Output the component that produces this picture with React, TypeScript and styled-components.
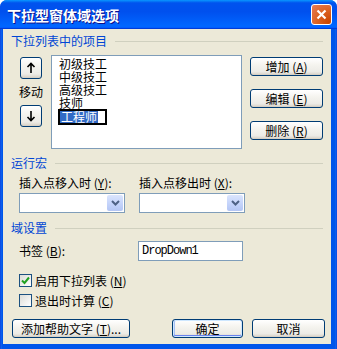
import React from "react";
import styled, { createGlobalStyle } from "styled-components";

const Global = createGlobalStyle`
  html, body { margin: 0; padding: 0; background: #ffffff; }
  body { font-family: "Noto Sans CJK SC", "Noto Sans", sans-serif; }
  * { box-sizing: border-box; }
`;

const Window = styled.div`
  width: 337px;
  height: 349px;
  display: flex;
  flex-direction: column;
  background: linear-gradient(90deg, #0831d9 0, #166aee 1px, #0055ea 2px, #0055ea calc(100% - 2px), #166aee calc(100% - 1px), #0831d9 100%);
  border-radius: 7px 7px 0 0;
  overflow: hidden;
  font-size: 12px;
  color: #000;
`;

const TitleBar = styled.div`
  height: 29px;
  flex: none;
  display: flex;
  align-items: center;
  justify-content: space-between;
  padding: 0 5px 0 7px;
  background: linear-gradient(180deg, #0997ff 0%, #0053ee 10%, #0050ee 40%, #0066ff 88%, #0066ff 93%, #005bff 95%, #003dd7 96%, #003dd7 100%);
`;

const Title = styled.span`
  color: #fff;
  font-size: 14px;
  font-weight: 700;
  letter-spacing: 0;
  text-shadow: 1px 1px #0f1089;
  line-height: 16px;
`;

const CloseButton = styled.div`
  width: 21px;
  height: 21px;
  border: 1px solid #fff;
  border-radius: 3px;
  background: radial-gradient(circle at 90% 90%, #cc4600 0%, #dc6527 55%, #e77c5a 100%);
  display: flex;
  align-items: center;
  justify-content: center;
`;

const Body = styled.div`
  flex: 1;
  margin: 0 6px 5px 3px;
  background: #ece9d8;
  padding: 5px 8px 0 8px;
  display: flex;
  flex-direction: column;
`;

const GroupHeader = styled.div<{ $top: number }>`
  display: flex;
  align-items: center;
  height: 14px;
  margin-top: ${(p) => p.$top}px;
`;

const GroupLabel = styled.span`
  color: #0046d5;
  font-size: 12px;
  line-height: 14px;
  white-space: nowrap;
`;

const GroupLine = styled.div`
  flex: 1;
  height: 1px;
  margin-left: 8px;
  background: #d0d0bf;
`;

const ItemsRow = styled.div`
  display: flex;
  align-items: flex-start;
  margin-top: 7px;
`;

const MoveColumn = styled.div`
  margin-left: 9px;
  padding-top: 2px;
  width: 22px;
  display: flex;
  flex-direction: column;
  align-items: center;
`;

const MoveLabel = styled.div`
  height: 26px;
  line-height: 26px;
  white-space: nowrap;
  font-size: 12px;
`;

const XPButton = styled.button<{ $w: number; $h?: number; $default?: boolean }>`
  width: ${(p) => p.$w}px;
  height: ${(p) => p.$h ?? 19}px;
  padding: 0;
  margin: 0;
  border: 1px solid #003c74;
  border-radius: 3px;
  background: linear-gradient(180deg, #ffffff 0%, #f5f4ef 40%, #ecebe6 80%, #d6d0c5 100%);
  box-shadow: ${(p) =>
    p.$default
      ? "inset 0 0 0 1px #cee7ff, inset 0 -1px 0 1px #6982ee, inset 1px 0 0 1px #a6c1f5"
      : "inset 0 -1px 0 0 #d6d0c5"};
  font-family: "Noto Sans CJK SC", "Noto Sans", sans-serif;
  font-size: 12px;
  line-height: 14px;
  color: #000;
  display: flex;
  align-items: center;
  justify-content: center;
  white-space: nowrap;
  flex: none;
`;

const ListBox = styled.div`
  margin-left: 9px;
  width: 192px;
  height: 94px;
  border: 1px solid #7f9db9;
  background: #fff;
  padding: 1px 0 0 7px;
  display: flex;
  flex-direction: column;
`;

const ListItem = styled.div`
  height: 13px;
  line-height: 13px;
  font-size: 12px;
  white-space: nowrap;
`;

const EditBox = styled.div`
  margin: 0 0 0 -1px;
  width: 49px;
  height: 16px;
  border: 2px solid #000;
  background: #fff;
  display: flex;
  align-items: center;
  font-size: 12px;
  line-height: 12px;
`;

const Selected = styled.span`
  background: #316ac5;
  color: #fff;
  padding: 0 1px;
  line-height: 12px;
`;

const ButtonColumn = styled.div`
  margin-left: 8px;
  padding-top: 2px;
  display: flex;
  flex-direction: column;
  gap: 13px;
`;

const FieldsRow = styled.div`
  display: flex;
  gap: 14px;
  margin-top: 6px;
  padding-left: 8px;
`;

const Field = styled.div`
  display: flex;
  flex-direction: column;
`;

const FieldLabel = styled.span`
  height: 14px;
  line-height: 14px;
  white-space: nowrap;
`;

const Combo = styled.div`
  margin-top: 3px;
  width: 106px;
  height: 20px;
  border: 1px solid #7f9db9;
  background: #fff;
  padding: 1px;
  display: flex;
  justify-content: flex-end;
`;

const DropButton = styled.div`
  width: 16px;
  height: 100%;
  border-radius: 2px;
  background: linear-gradient(180deg, #dbe5fd 0%, #c6d5fb 50%, #b3c5f4 100%);
  display: flex;
  align-items: center;
  justify-content: center;
`;

const BookmarkRow = styled.div`
  display: flex;
  align-items: center;
  margin-top: 6px;
  padding-left: 8px;
`;

const RowLabel = styled.span`
  width: 119px;
  white-space: nowrap;
  line-height: 14px;
`;

const TextBox = styled.div`
  width: 105px;
  height: 20px;
  border: 1px solid #7f9db9;
  background: #fff;
  padding-left: 3px;
  font-family: "Liberation Mono", monospace;
  font-size: 12px;
  letter-spacing: -1px;
  line-height: 18px;
`;

const CheckRow = styled.div<{ $top: number }>`
  display: flex;
  align-items: center;
  gap: 3px;
  height: 15px;
  margin-top: ${(p) => p.$top}px;
  padding-left: 8px;
  white-space: nowrap;
`;

const CheckBox = styled.div`
  width: 13px;
  height: 13px;
  border: 1px solid #1c5180;
  background: linear-gradient(135deg, #dcdcd7 0%, #ffffff 100%);
  display: flex;
  align-items: center;
  justify-content: center;
`;

const BottomRow = styled.div`
  display: flex;
  margin-top: 11px;
`;

const Spacer = styled.div<{ $w: number }>`
  width: ${(p) => p.$w}px;
  flex: none;
`;

const Arrow = ({ up }: { up: boolean }) => (
  <svg width="12" height="12" viewBox="0 0 12 12">
    {up ? (
      <path d="M6 1.5 V11 M2.5 5 L6 1.5 L9.5 5" stroke="#000" strokeWidth="1.6" fill="none" />
    ) : (
      <path d="M6 1 V10.5 M2.5 7 L6 10.5 L9.5 7" stroke="#000" strokeWidth="1.6" fill="none" />
    )}
  </svg>
);

const Chevron = () => (
  <svg width="9" height="6" viewBox="0 0 9 6">
    <path d="M1 1 L4.5 4.5 L8 1" stroke="#4d6185" strokeWidth="2" fill="none" />
  </svg>
);

const Check = () => (
  <svg width="9" height="9" viewBox="0 0 9 9">
    <path d="M1 4.5 L3.5 7 L8 1.5" stroke="#21a121" strokeWidth="2" fill="none" />
  </svg>
);

const CloseX = () => (
  <svg width="11" height="11" viewBox="0 0 11 11">
    <path d="M1.5 1.5 L9.5 9.5 M9.5 1.5 L1.5 9.5" stroke="#fff" strokeWidth="2.2" fill="none" />
  </svg>
);

const M = ({ k }: { k: string }) => (
  <>
    (<u>{k}</u>)
  </>
);

export default function App() {
  return (
    <>
      <Global />
      <Window>
        <TitleBar>
          <Title>下拉型窗体域选项</Title>
          <CloseButton>
            <CloseX />
          </CloseButton>
        </TitleBar>
        <Body>
          <GroupHeader $top={0}>
            <GroupLabel>下拉列表中的项目</GroupLabel>
            <GroupLine />
          </GroupHeader>
          <ItemsRow>
            <MoveColumn>
              <XPButton $w={22} $h={22}>
                <Arrow up />
              </XPButton>
              <MoveLabel>移动</MoveLabel>
              <XPButton $w={22} $h={22}>
                <Arrow up={false} />
              </XPButton>
            </MoveColumn>
            <ListBox>
              <ListItem>初级技工</ListItem>
              <ListItem>中级技工</ListItem>
              <ListItem>高级技工</ListItem>
              <ListItem>技师</ListItem>
              <EditBox>
                <Selected>工程师</Selected>
              </EditBox>
            </ListBox>
            <ButtonColumn>
              <XPButton $w={73}>
                增加 <M k="A" />
              </XPButton>
              <XPButton $w={73}>
                编辑 <M k="E" />
              </XPButton>
              <XPButton $w={73}>
                删除 <M k="R" />
              </XPButton>
            </ButtonColumn>
          </ItemsRow>

          <GroupHeader $top={7}>
            <GroupLabel>运行宏</GroupLabel>
            <GroupLine />
          </GroupHeader>
          <FieldsRow>
            <Field>
              <FieldLabel>
                插入点移入时 <M k="Y" />:
              </FieldLabel>
              <Combo>
                <DropButton>
                  <Chevron />
                </DropButton>
              </Combo>
            </Field>
            <Field>
              <FieldLabel>
                插入点移出时 <M k="X" />:
              </FieldLabel>
              <Combo>
                <DropButton>
                  <Chevron />
                </DropButton>
              </Combo>
            </Field>
          </FieldsRow>

          <GroupHeader $top={8}>
            <GroupLabel>域设置</GroupLabel>
            <GroupLine />
          </GroupHeader>
          <BookmarkRow>
            <RowLabel>
              书签 <M k="B" />:
            </RowLabel>
            <TextBox>DropDown1</TextBox>
          </BookmarkRow>
          <CheckRow $top={12}>
            <CheckBox>
              <Check />
            </CheckBox>
            <span>
              启用下拉列表 <M k="N" />
            </span>
          </CheckRow>
          <CheckRow $top={5}>
            <CheckBox />
            <span>
              退出时计算 <M k="C" />
            </span>
          </CheckRow>
          <BottomRow>
            <Spacer $w={1} />
            <XPButton $w={118}>
              添加帮助文字 <M k="T" />...
            </XPButton>
            <Spacer $w={42} />
            <XPButton $w={71} $default>
              确定
            </XPButton>
            <Spacer $w={9} />
            <XPButton $w={73}>取消</XPButton>
          </BottomRow>
        </Body>
      </Window>
    </>
  );
}
